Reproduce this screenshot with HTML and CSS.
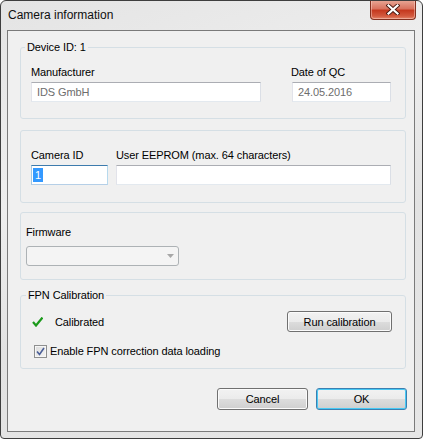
FILE: index.html
```html
<!DOCTYPE html>
<html lang="en">
<head>
  <meta charset="UTF-8">
  <meta name="viewport" content="width=device-width, initial-scale=1.0">
  <title>Camera information</title>
  <link rel="stylesheet" href="styles.css">
</head>
<body>
  <div class="window">
    <div class="titlebar">
      <span class="title">Camera information</span>
      <button class="close-btn" aria-label="Close">
        <svg width="14" height="11" viewBox="0 0 14 11">
          <path d="M2.5 1.5 L11.5 9.5 M11.5 1.5 L2.5 9.5" stroke="#4a1a12" stroke-width="4" stroke-linecap="square"/>
          <path d="M2.5 1.5 L11.5 9.5 M11.5 1.5 L2.5 9.5" stroke="#ffffff" stroke-width="2.2" stroke-linecap="square"/>
        </svg>
      </button>
    </div>

    <div class="client">
      <fieldset class="group group-device">
        <legend class="legend-device">Device ID: 1</legend>
        <div class="group-body device-body">
          <div class="field field-manufacturer">
            <label>Manufacturer</label>
            <div class="textbox readonly">IDS GmbH</div>
          </div>
          <div class="field field-date">
            <label class="label-date">Date of QC</label>
            <div class="textbox readonly">24.05.2016</div>
          </div>
        </div>
      </fieldset>

      <fieldset class="group group-ids">
        <div class="group-body ids-body">
          <div class="field field-camid">
            <label>Camera ID</label>
            <div class="textbox focused"><span class="selected">1</span></div>
          </div>
          <div class="field field-eeprom">
            <label>User EEPROM (max. 64 characters)</label>
            <div class="textbox"></div>
          </div>
        </div>
      </fieldset>

      <fieldset class="group group-firmware">
        <div class="group-body firmware-body">
          <label>Firmware</label>
          <div class="combo disabled">
            <svg width="7" height="4" viewBox="0 0 7 4"><path d="M0 0 H7 L3.5 4 Z" fill="#a7a7a7"/></svg>
          </div>
        </div>
      </fieldset>

      <fieldset class="group group-fpn">
        <legend class="legend-fpn">FPN Calibration</legend>
        <div class="group-body fpn-body">
          <div class="calib-row">
            <svg class="check-icon" width="11" height="10" viewBox="0 0 11 10">
              <path d="M1 5 L4 8.5 L10.5 0.5" fill="none" stroke="#1b9a1b" stroke-width="2.2"/>
            </svg>
            <span class="calib-status">Calibrated</span>
            <button class="btn btn-run">Run calibration</button>
          </div>
          <label class="check-row">
            <span class="checkbox">
              <svg width="9" height="9" viewBox="0 0 9 9">
                <path d="M1 4.5 L3.5 7.5 L8 1" fill="none" stroke="#4b5f98" stroke-width="1.6"/>
              </svg>
            </span>
            Enable FPN correction data loading
          </label>
        </div>
      </fieldset>

      <div class="actions">
        <button class="btn btn-dialog">Cancel</button>
        <button class="btn btn-dialog btn-default">OK</button>
      </div>
    </div>
  </div>
</body>
</html>
```

FILE: styles.css
```css
body {
  margin: 0;
  font-family: "Liberation Sans", Arial, sans-serif;
  font-size: 11px;
  letter-spacing: -0.1px;
  color: #000;
  background: #fff;
}

.window {
  width: 423px;
  height: 439px;
  box-sizing: border-box;
  border: 1px solid #3e3e3e;
  border-radius: 6px 6px 4px 4px;
  background: linear-gradient(160deg, #e4e4e4 0%, #eeeeee 35%, #e2e2e2 60%, #e6e6e6 100%);
  display: flex;
  flex-direction: column;
  overflow: hidden;
}

.titlebar {
  height: 29px;
  flex-shrink: 0;
  display: flex;
  align-items: flex-start;
}

.title {
  padding-left: 7px;
  line-height: 28px;
  font-size: 12px;
  letter-spacing: 0;
  color: #101010;
}

.close-btn {
  margin-left: auto;
  margin-right: 6px;
  margin-top: -1px;
  width: 46px;
  height: 20px;
  padding: 0;
  border: 1px solid #83301f;
  border-top: none;
  border-radius: 0 0 4px 4px;
  background: linear-gradient(#e9a998 0%, #d9735f 45%, #c5391f 55%, #d35a3f 85%, #e5876c 100%);
  box-shadow: inset 0 0 0 1px rgba(255, 220, 210, 0.45);
  display: flex;
  align-items: center;
  justify-content: center;
}

.client {
  flex: 1;
  margin: 0 7px 6px 6px;
  border: 1px solid #7a7a7a;
  background: #f0f0f0;
  padding: 0 8px 0 12px;
}

.group {
  margin: 0;
  padding: 0;
  min-width: 0;
  border: 1px solid #d5dfe5;
  border-radius: 3px;
}

.group legend {
  padding: 0 2px;
  line-height: 14px;
}

.legend-device {
  margin-left: 4px;
}

.legend-fpn {
  margin-left: 5px;
}

.group-device {
  margin-top: 9px;
}

.group-ids {
  margin-top: 11px;
}

.group-firmware {
  margin-top: 9px;
}

.group-fpn {
  margin-top: 8px;
}

.field label,
.firmware-body label {
  display: block;
  line-height: 14px;
}

.field label {
  margin-bottom: 3px;
}

.label-date {
  margin-left: -1px;
}

.device-body {
  display: flex;
  gap: 31px;
  padding: 11px 0 16px 10px;
}

.field-manufacturer {
  width: 230px;
}

.field-date {
  width: 99px;
}

.ids-body {
  display: flex;
  gap: 8px;
  padding: 17px 0 17px 10px;
}

.field-camid {
  width: 77px;
}

.field-eeprom {
  width: 275px;
}

.textbox {
  height: 20px;
  box-sizing: border-box;
  border: 1px solid;
  border-color: #abadb3 #dbdfe6 #e3e9ef #e2e3ea;
  background: #fff;
  padding: 0 5px;
  line-height: 18px;
  white-space: nowrap;
}

.textbox.readonly {
  color: #6d6d6d;
}

.textbox.focused {
  border-color: #3d7bad #b7d9ed #b5cfe7 #a4c9e3;
  padding: 2px 0 0 1px;
  line-height: 14px;
}

.selected {
  display: inline-block;
  width: 10px;
  text-align: center;
  background: #3399ff;
  color: #fff;
}

.firmware-body {
  padding: 12px 0 13px 5px;
}

.combo {
  margin-top: 7px;
  width: 153px;
  height: 20px;
  box-sizing: border-box;
  border: 1px solid #adb2b5;
  border-radius: 3px;
  background: #f4f4f4;
  display: flex;
  align-items: center;
  justify-content: flex-end;
  padding-right: 4px;
}

.fpn-body {
  padding: 9px 13px 10px 0;
}

.calib-row {
  height: 21px;
  display: flex;
  align-items: center;
  padding-left: 11px;
}

.check-icon {
  margin-right: 12px;
}

.btn {
  font-family: "Liberation Sans", Arial, sans-serif;
  font-size: 11px;
  letter-spacing: -0.1px;
  color: #000;
  box-sizing: border-box;
  border: 1px solid #707070;
  border-radius: 3px;
  background: linear-gradient(#f2f2f2 0%, #ebebeb 50%, #dddddd 50%, #cfcfcf 100%);
  box-shadow: inset 0 0 0 1px #fbfbfb;
  padding: 0;
}

.btn-run {
  margin-left: auto;
  width: 105px;
  height: 21px;
}

.check-row {
  margin-top: 12px;
  height: 14px;
  display: flex;
  align-items: center;
  padding-left: 13px;
  gap: 3px;
}

.checkbox {
  width: 13px;
  height: 13px;
  box-sizing: border-box;
  border: 1px solid #8e8f8f;
  background: linear-gradient(135deg, #dcdcdc 0%, #f4f4f4 100%);
  box-shadow: inset 0 0 0 1px #f6f6f6;
  display: flex;
  align-items: center;
  justify-content: center;
}

.actions {
  margin-top: 19px;
  margin-right: -1px;
  display: flex;
  justify-content: flex-end;
  gap: 8px;
}

.btn-dialog {
  width: 91px;
  height: 22px;
}

.btn-default {
  border-color: #3c7fb1;
  box-shadow: inset 0 0 0 1px #48c9f4;
}
```
